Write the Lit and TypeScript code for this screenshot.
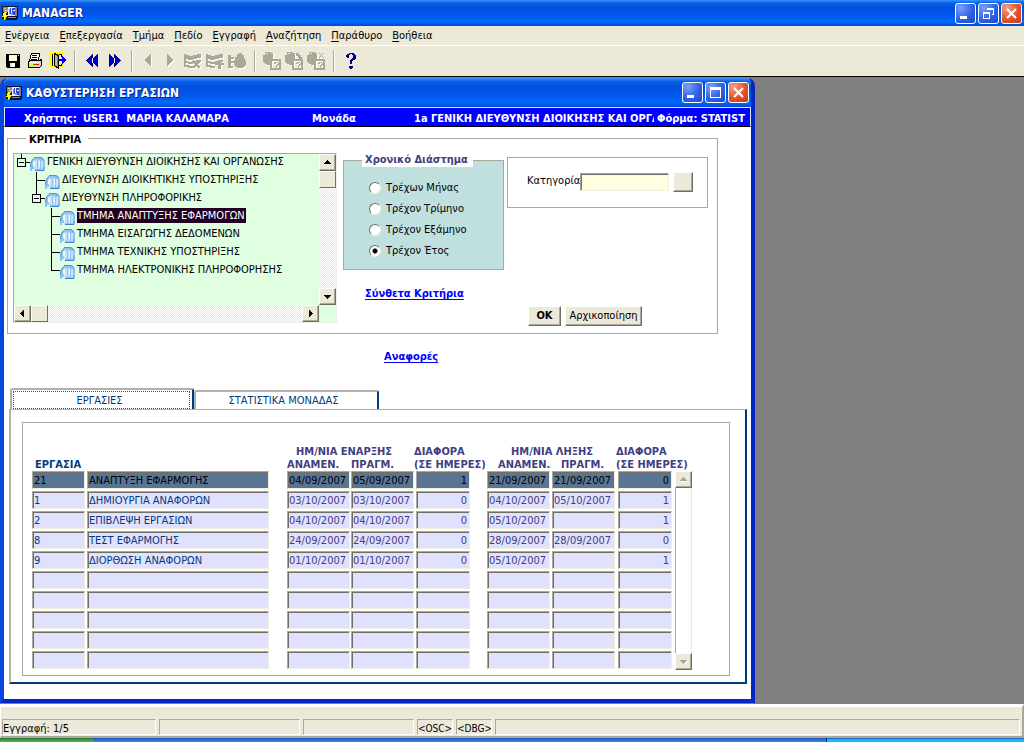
import { LitElement, html, svg, css, nothing } from "lit";
import { customElement, state } from "lit/decorators.js";
import { classMap } from "lit/directives/class-map.js";

interface TreeNode {
  text: string;
  level: number;
  open?: boolean;
  last?: boolean;
}

interface Task {
  code: string;
  name: string;
  startPlan: string;
  startReal: string;
  startDiff: string;
  endPlan: string;
  endReal: string;
  endDiff: string;
}

const MENU = ["Ενέργεια", "Επεξεργασία", "Τμήμα", "Πεδίο", "Εγγραφή", "Αναζήτηση", "Παράθυρο", "Βοήθεια"];

const TREE: TreeNode[] = [
  { text: "ΓΕΝΙΚΗ ΔΙΕΥΘΥΝΣΗ ΔΙΟΙΚΗΣΗΣ ΚΑΙ ΟΡΓΑΝΩΣΗΣ", level: 0, open: true },
  { text: "ΔΙΕΥΘΥΝΣΗ ΔΙΟΙΚΗΤΙΚΗΣ ΥΠΟΣΤΗΡΙΞΗΣ", level: 1 },
  { text: "ΔΙΕΥΘΥΝΣΗ ΠΛΗΡΟΦΟΡΙΚΗΣ", level: 1, open: true },
  { text: "ΤΜΗΜΑ ΑΝΑΠΤΥΞΗΣ ΕΦΑΡΜΟΓΩΝ", level: 2 },
  { text: "ΤΜΗΜΑ ΕΙΣΑΓΩΓΗΣ ΔΕΔΟΜΕΝΩΝ", level: 2 },
  { text: "ΤΜΗΜΑ ΤΕΧΝΙΚΗΣ ΥΠΟΣΤΗΡΙΞΗΣ", level: 2 },
  { text: "ΤΜΗΜΑ ΗΛΕΚΤΡΟΝΙΚΗΣ ΠΛΗΡΟΦΟΡΗΣΗΣ", level: 2, last: true },
];

const PERIODS = ["Τρέχων Μήνας", "Τρέχον Τρίμηνο", "Τρέχον Εξάμηνο", "Τρέχον Έτος"];

const task = (
  code = "", name = "", startPlan = "", startReal = "", startDiff = "", endPlan = "", endReal = "", endDiff = "",
): Task => ({ code, name, startPlan, startReal, startDiff, endPlan, endReal, endDiff });

const TASKS: Task[] = [
  task("21", "ΑΝΑΠΤΥΞΗ ΕΦΑΡΜΟΓΗΣ", "04/09/2007", "05/09/2007", "1", "21/09/2007", "21/09/2007", "0"),
  task("1", "ΔΗΜΙΟΥΡΓΙΑ ΑΝΑΦΟΡΩΝ", "03/10/2007", "03/10/2007", "0", "04/10/2007", "05/10/2007", "1"),
  task("2", "ΕΠΙΒΛΕΨΗ ΕΡΓΑΣΙΩΝ", "04/10/2007", "04/10/2007", "0", "05/10/2007", "", "1"),
  task("8", "ΤΕΣΤ ΕΦΑΡΜΟΓΗΣ", "24/09/2007", "24/09/2007", "0", "28/09/2007", "28/09/2007", "0"),
  task("9", "ΔΙΟΡΘΩΣΗ ΑΝΑΦΟΡΩΝ", "01/10/2007", "01/10/2007", "0", "05/10/2007", "", "1"),
  task(), task(), task(), task(), task(),
];

const FIELDS: { key: keyof Task; label: string; kind: string }[] = [
  { key: "code", label: "Κωδικός εργασίας", kind: "name" },
  { key: "name", label: "Εργασία", kind: "name wide" },
  { key: "startPlan", label: "Αναμενόμενη έναρξη", kind: "date" },
  { key: "startReal", label: "Πραγματική έναρξη", kind: "date" },
  { key: "startDiff", label: "Διαφορά έναρξης", kind: "diff" },
  { key: "endPlan", label: "Αναμενόμενη λήξη", kind: "date" },
  { key: "endReal", label: "Πραγματική λήξη", kind: "date" },
  { key: "endDiff", label: "Διαφορά λήξης", kind: "diff" },
];

/* Grey toolbar glyphs carry a white copy one pixel down and right. */
const etched = (shape: (c: string) => unknown) => svg`
  <g transform="translate(1 1)">${shape("#fff")}</g>${shape("#aca899")}`;

const grid = (c: string) => svg`
  <path fill=${c} d="M0 2h2v1h3v1h4v-1h4v-1h4v4h-4v1h-4v1h-5v-1h-2v2h2v1h5v-1h3v-1h5v2h-4v1h-4v1h-5v-1h-2v2h3v1h4v2h-5v-1h-4z"/>`;
const drum = (c: string) => svg`
  <path fill=${c} d="M2 0h6v1h2v6h-3v6h-3v-1h-2v-1h-1v-1h-1v-7h2z"/>
  <path fill="#ece9d8" d="M3 1h2v1h-2z"/>
  <path fill="none" stroke=${c} stroke-width="2" d="M8 8h9v9h-9z"/>
  <path fill=${c} d="M11 11h1v-1h3v1h1v2h-1v1h-1v1h-1v-2h1v-1h1v-1h-2v1h-2zM13 15h1v1h-1z"/>`;

const TOOLS: ({ label: string; off?: boolean; art: unknown } | null)[] = [
  {
    label: "Αποθήκευση",
    art: svg`<path fill="#000" d="M2 2h14v14h-13l-1-1z"/><path fill="#ffffd8" d="M5 3h8v6h-8z"/><path fill="#ece9d8" d="M14 3h1v1h-1zM6 11h5v4h-5z"/><path fill="#fff" d="M8 11h3v4h-3z"/>`,
  },
  {
    label: "Εκτύπωση",
    art: svg`<path fill="#fff" stroke="#000" d="M5.500 1.500h8l-1 7h-9z"/><path stroke="#000" d="M6 3.500h5M6 5.500h5M5 7.500h6"/><path fill="#d8d5c8" stroke="#000" d="M2.500 9.500l2-1h9l2-1v6l-2 2h-11z"/><path fill="#fff" d="M3 10h10v1h-10z"/><path fill="#ff0" d="M4 12h3v1h-3z"/><path fill="#f00" d="M10 12h3v1h-3z"/><path fill="#0a0" d="M7 12h3v1h-3z"/>`,
  },
  {
    label: "Έξοδος",
    art: svg`<path fill="#ff0" d="M1 0h15v3h-1v9h1v3h-14v-3h-1v-3h1v-3h-1z"/><path fill="#ece9d8" d="M11 4h2v10h-2z"/><path fill="#8a8a78" stroke="#000" d="M6.500 1.500l4 2v13l-4-3z"/><path fill="#b8b8a4" d="M7 3l2 1v10l-2-1z"/><path stroke="#000" d="M4.500 2v12M11 2.500h2v2M11 13.500h2v-2"/><path fill="#00f" d="M11 7h3v-3h1l3 4-3 4h-1v-3h-3z"/>`,
  },
  null,
  {
    label: "Προηγούμενο μπλοκ",
    art: svg`<path fill="#00c" stroke="#000080" d="M9.500 2.500v12l-6-6zM14.500 2.500v12l-6-6z"/><path stroke="#fff" d="M9.500 6v5"/>`,
  },
  {
    label: "Επόμενο μπλοκ",
    art: svg`<path fill="#00c" stroke="#000080" d="M4.500 2.500v12l6-6zM9.500 2.500v12l6-6z"/><path stroke="#fff" d="M9.500 6v5"/>`,
  },
  null,
  { label: "Προηγούμενη εγγραφή", off: true, art: etched((c) => svg`<path fill=${c} d="M11 2v12l-7-6z"/>`) },
  { label: "Επόμενη εγγραφή", off: true, art: etched((c) => svg`<path fill=${c} d="M5 2v12l7-6z"/>`) },
  {
    label: "Διαγραφή εγγραφής", off: true,
    art: etched((c) => svg`${grid(c)}<path stroke=${c} stroke-width="2" d="M9 9l7 7M16 9l-7 7"/>`),
  },
  {
    label: "Εισαγωγή εγγραφής", off: true,
    art: etched((c) => svg`${grid(c)}<path fill=${c} d="M12 8h3v3h3v2h-3v4h-3v-4h-3v-2h3z"/>`),
  },
  {
    label: "Κλείδωμα εγγραφής", off: true,
    art: etched((c) => svg`<path fill=${c} d="M0 3h3v2h3v2h-3v2h3v2h-3v3h2v2h-5zM9 2h2v-1h3v2h2v3h1v2h1v5h-1v2h-2v1h-6v-1h-2v-2h-1v-5h1v-3h2z"/>`),
  },
  null,
  { label: "Εισαγωγή κριτηρίων", off: true, art: etched(drum) },
  {
    label: "Εκτέλεση αναζήτησης", off: true,
    art: etched((c) => svg`${drum(c)}<path fill=${c} d="M11 1h3v2h2v2h2l-3 3-3-3h1v-1h-2z"/>`),
  },
  {
    label: "Ακύρωση αναζήτησης", off: true,
    art: etched((c) => svg`${drum(c)}<path stroke=${c} d="M12 1l5 5M17 1l-5 5"/>`),
  },
  null,
  {
    label: "Βοήθεια",
    art: svg`<path fill="#000080" d="M5 2h2v-1h5v1h1v1h1v4h-1v1h-2v1h-1v3h-2v-4h1v-1h1v-1h1v-3h-1v-1h-2v1h-1v3h-2v-1h-1v-2h1zM8 14h2v-0h1v2h-1v1h-2v-1h-1v-2h1z"/>`,
  },
];

const appIcon = html`<svg class="app-icon" viewBox="0 0 16 16" width="16" height="16" shape-rendering="crispEdges" aria-hidden="true">
  <path fill="#101020" d="M0 1h16v13h-1v1h-11v-1h-4z"/><path fill="#8088b0" d="M1 2h6v5h-6z"/><path fill="#c8cce0" d="M2 3h2v1h-2zM3 5h3v1h-3z"/>
  <path fill="#e8ecff" d="M6 2h7v9h-7z"/><path fill="#2848d8" d="M8 3h1v6h-1zM10 3h3v2h-2v1h2v4h-3z"/><path fill="#7898f0" d="M7 4h1v5h-1zM9 8h2v2h-2z"/>
  <path fill="#987888" d="M13 2h2v9h-2z"/><path fill="#90906c" d="M6 12h8v1h-8z"/>
  <path fill="#ff0" d="M2 7h3l-1 3h2l-4 6v-4h-2z"/>
</svg>`;

const arrow = (dir: "up" | "down" | "left" | "right", dim = false) => {
  const shapes = { up: "M4 9h7l-3.500-4z", down: "M4 6h7l-3.500 4z", left: "M9 4v7l-4-3.500z", right: "M6 4v7l4-3.500z" };
  return html`<svg viewBox="0 0 15 15" width="15" height="15" shape-rendering="crispEdges" aria-hidden="true">
    ${dim ? svg`<path fill="#fff" transform="translate(1 1)" d=${shapes[dir]} />` : nothing}
    <path fill=${dim ? "#aca899" : "#000"} d=${shapes[dir]} />
  </svg>`;
};

@customElement("window-buttons")
class WindowButtons extends LitElement {
  static properties = { restore: { type: Boolean } };
  declare restore: boolean;

  static styles = css`
    :host { display: flex; gap: 2px; }
    button {
      width: 21px; height: 21px; padding: 0; border: 1px solid #fff; border-radius: 3px;
      background: radial-gradient(circle at 25% 20%, #7ba0f8, #2f62e6 55%, #1c49c8); display: grid; place-items: center;
    }
    .close { background: radial-gradient(circle at 25% 20%, #f0a083, #e0542f 55%, #c33c13); }
    svg { display: block; }
  `;

  render() {
    const icon = (d: unknown) => html`<svg viewBox="0 0 19 19" width="19" height="19" aria-hidden="true" shape-rendering="crispEdges">${d}</svg>`;
    return html`
      <button aria-label="Ελαχιστοποίηση">${icon(svg`<path fill="#fff" d="M4 12h7v3h-7z"/>`)}</button>
      <button aria-label="Μέγεθος">${icon(this.restore
        ? svg`<path fill="none" stroke="#fff" d="M4.500 8.500h6v6h-6zM4 9.500h7M8.500 6v-1.500h6v6h-2M8 5.500h7"/>`
        : svg`<path fill="none" stroke="#fff" d="M4.500 4.500h10v10h-10z"/><path fill="#fff" d="M4 4h11v3h-11z"/>`)}</button>
      <button class="close" aria-label="Κλείσιμο"><svg viewBox="0 0 19 19" width="19" height="19" aria-hidden="true"><path stroke="#fff" stroke-width="2.200" d="M5 5l9 9M14 5l-9 9"/></svg></button>
    `;
  }
}

@customElement("org-tree")
class OrgTree extends LitElement {
  @state() private selected = 3;

  static styles = css`
    :host {
      display: grid; grid-template-columns: 1fr 17px; grid-template-rows: 1fr 17px; box-sizing: border-box;
      border: 1px solid; border-color: #aca899 #f1efe2 #f1efe2 #aca899; background: #e0ffe0;
      font: 11px/14px "DejaVu Sans Condensed", "DejaVu Sans", sans-serif; color: #000;
    }
    ul { margin: 0; padding: 0; list-style: none; overflow: hidden; }
    li { display: flex; align-items: flex-start; height: 18px; white-space: nowrap; }
    svg { display: block; flex: none; }
    .node { border: 0; padding: 0 1px 0 0; background: none; font: inherit; line-height: 15px; color: inherit; height: 15px; }
    .node.selected { background: #200020; color: #fff; }
    .bar { display: flex; background: repeating-conic-gradient(#fff 0 25%, #ece9d8 0 50%) 0 0 / 2px 2px; }
    .bar.v { flex-direction: column; }
    .bar button {
      width: 17px; height: 17px; padding: 0; background: #ece9d8; display: grid; place-items: center;
      border: 1px solid; border-color: #fff #716f64 #716f64 #fff; box-shadow: inset -1px -1px #aca899;
    }
    .track { flex: 1; }
    .thumb { width: 17px; height: 17px; box-sizing: border-box; background: #ece9d8; border: 1px solid; border-color: #fff #716f64 #716f64 #fff; }
  `;

  private branch(n: TreeNode) {
    const x = 7 + n.level * 15;
    const icon = x + 9;
    const stop = n.last ? 9 : n.open ? 4 : 18;
    return html`<svg width=${x + 26} height="18" shape-rendering="crispEdges" aria-hidden="true">
      <path fill="none" stroke="#000" d=${`M${x}.5 0V${stop}M${x}.5 8.5H${icon}`} />
      ${n.open ? svg`<path fill="#e0ffe0" stroke="#000" d=${`M${x - 4}.5 4.5h8v8h-8z`}/><path stroke="#000" d=${`M${x - 2} 8.500h5`}/>` : nothing}
      <g transform=${`translate(${icon} 2)`} shape-rendering="auto">
        <path fill="#8ec4f4" d="M0 15v-7q1-4 4-6l3-1h4q3 1 4 4v7l-2 2h-8v-1h-3v2z"/>
        <path fill="#c4e2fc" d="M4 13v-7l3-3v10zM8 13v-9h2v9zM11 13v-8h2v8z"/>
        <path fill="#f0f8ff" d="M3 10v-4l2-2v7zM9 5h1v6h-1z"/>
        <path fill="none" stroke="#5c94b4" d="M.5 11q0-6 3-8.500M4 1.500h6q3 0 4 3"/>
        <path fill="none" stroke="#3f88d0" d="M5 14.500h9v-3"/>
      </g>
    </svg>`;
  }

  render() {
    return html`
      <ul role="tree" aria-label="Μονάδες">
        ${TREE.map((n, i) => html`<li role="treeitem" aria-level=${n.level + 1}>${this.branch(n)}<button
          class=${classMap({ node: true, selected: i === this.selected })}
          @click=${() => (this.selected = i)}>${n.text}</button></li>`)}
      </ul>
      <div class="bar v">
        <button aria-label="Πάνω">${arrow("up")}</button><div class="thumb"></div><div class="track"></div>
        <button aria-label="Κάτω">${arrow("down")}</button>
      </div>
      <div class="bar">
        <button aria-label="Αριστερά">${arrow("left")}</button><div class="thumb"></div><div class="track"></div>
        <button aria-label="Δεξιά">${arrow("right")}</button>
      </div>
    `;
  }
}

@customElement("task-table")
class TaskTable extends LitElement {
  @state() private current = 0;

  static styles = css`
    :host { display: flex; gap: 0; font: 11px/14px "DejaVu Sans Condensed", "DejaVu Sans", sans-serif; }
    table { width: 643px; table-layout: fixed; border-collapse: collapse; }
    th, td { padding: 0; }
    th { font-weight: bold; color: #404080; text-align: left; white-space: nowrap; height: 14px; }
    .units th { height: 12px; line-height: 12px; }
    th.task { color: #003c7c; padding-left: 3px; }
    .group { text-align: left; padding-left: 9px; }
    .group.end { padding-left: 24px; }
    .plan { padding-left: 11px; }
    .real { padding-left: 9px; }
    .gap { text-indent: -2px; }
    td { height: 20px; vertical-align: top; }
    input {
      display: block; box-sizing: border-box; width: 63px; height: 18px; padding: 0 0 0 1px; margin: 0; outline: 0;
      border: 1px solid; border-color: #aca899 #f1efe2 #f1efe2 #aca899; box-shadow: inset 1px 1px #716f64;
      background: #e0e0ff; font: inherit; color: #404080; border-radius: 0;
    }
    .name { width: 53px; color: #003c7c; }
    .wide { width: 182px; }
    .diff { width: 54px; text-align: right; padding-right: 2px; }
    .current input { background: #5a7593; color: #000; }
    .bar {
      width: 17px; margin-top: 26px; height: 199px; display: flex; flex-direction: column; justify-content: space-between;
      box-sizing: border-box; border-left: 1px solid #aca899; border-right: 1px solid #ece9d8;
    }
    .bar button {
      width: 17px; height: 17px; margin-left: -1px; padding: 0; background: #ece9d8; display: grid; place-items: center;
      border: 1px solid; border-color: #fff #716f64 #716f64 #fff; box-shadow: inset -1px -1px #aca899;
    }
  `;

  render() {
    return html`
      <table>
        <colgroup>
          <col width="55" /><col width="200" /><col width="64" /><col width="65" /><col width="71" /><col width="65" /><col width="66" /><col width="57" />
        </colgroup>
        <thead>
          <tr>
            <th colspan="2"></th><th class="group" colspan="2">ΗΜ/ΝΙΑ ΕΝΑΡΞΗΣ</th><th class="gap">ΔΙΑΦΟΡΑ</th>
            <th class="group end" colspan="2">ΗΜ/ΝΙΑ ΛΗΞΗΣ</th><th class="gap">ΔΙΑΦΟΡΑ</th>
          </tr>
          <tr class="units">
            <th class="task" colspan="2">ΕΡΓΑΣΙΑ</th><th>ΑΝΑΜΕΝ.</th><th>ΠΡΑΓΜ.</th><th class="gap">(ΣΕ ΗΜΕΡΕΣ)</th>
            <th class="plan">ΑΝΑΜΕΝ.</th><th class="real">ΠΡΑΓΜ.</th><th class="gap">(ΣΕ ΗΜΕΡΕΣ)</th>
          </tr>
        </thead>
        <tbody>
          ${TASKS.map((t, i) => html`<tr class=${classMap({ current: i === this.current })}>
            ${FIELDS.map((f) => html`<td><input class=${f.kind} aria-label=${`${f.label} ${i + 1}`} .value=${t[f.key]}
              @focus=${() => (this.current = i)} /></td>`)}
          </tr>`)}
        </tbody>
      </table>
      <div class="bar">
        <button aria-label="Πάνω">${arrow("up", true)}</button>
        <button aria-label="Κάτω">${arrow("down", true)}</button>
      </div>
    `;
  }
}

@customElement("app-root")
class AppRoot extends LitElement {
  @state() private tab = 0;

  static styles = css`
    :host {
      display: flex; flex-direction: column; height: 100vh; overflow: hidden; background: #808080; color: #000;
      font: 11px/14px "DejaVu Sans Condensed", "DejaVu Sans", sans-serif;
    }
    .title {
      display: flex; align-items: center; gap: 4px; flex: none; height: 26px; padding: 0 2px; color: #fff;
      background: linear-gradient(#3a95ff, #0a5fe8 12%, #0050dc 30%, #0058ee 60%, #0068ff 85%, #0048c8);
    }
    .title h1, .title h2 { flex: 1; margin: 0; font: bold 12px/16px "DejaVu Sans Condensed", "DejaVu Sans", sans-serif; text-shadow: 1px 1px #0a1883; }
    .app-icon { display: block; }
    nav { display: flex; flex: none; gap: 10px; height: 19px; padding: 0 5px; align-items: center; background: #ece9d8; border-bottom: 1px solid #fff; }
    nav a { color: inherit; text-decoration: none; }
    nav u { text-decoration: underline; text-underline-offset: 2px; }
    .tools { display: flex; flex: none; align-items: center; height: 30px; padding: 0 2px; background: #ece9d8; border-bottom: 1px solid #000; }
    .tools button { width: 22px; height: 22px; padding: 0; border: 0; background: none; display: grid; place-items: center; }
    .tools svg { display: block; }
    .sep { width: 1px; height: 22px; margin: 0 5px 0 6px; border-right: 1px solid #fff; background: #aca899; box-sizing: content-box; }
    .desk { flex: 1; min-height: 0; display: flex; align-items: flex-start; padding: 1px 0 0; background: #808080; }

    .window {
      width: 755px; height: 100%; box-sizing: border-box; display: flex; flex-direction: column; overflow: hidden;
      background: #fff; border-radius: 8px 8px 0 0; border: solid #0845e0; border-width: 0 4px 4px;
      border-right-color: #0428c0; border-bottom-color: #0428c0;
    }
    .window .title { height: 29px; margin: 0 -4px; padding: 0 6px; gap: 4px; }
    .info {
      flex: none; display: grid; grid-template-columns: 59px 229px 102px 240px 1fr; height: 18px; padding-left: 19px;
      border: 1px solid; border-color: #dfe4ff #dfe4ff #000 #dfe4ff; background: #00f; color: #fff; font-weight: bold; line-height: 22px; white-space: nowrap;
    }
    .info span { overflow: hidden; white-space: pre; }
    .info .form { margin-left: 3px; }
    fieldset { margin: 0; padding: 0; min-width: 0; border: 1px solid #aca899; }
    legend { font-weight: bold; }
    .criteria { margin: 2px 33px 0 3px; padding: 0 0 7px 5px; display: block; }
    .criteria > legend { margin-left: 13px; padding: 4px 7px 0 3px; }
    .criteria-row { display: grid; grid-template-columns: 324px 161px 1fr; grid-template-rows: 173px; column-gap: 6px; padding-top: 6px; }
    org-tree { height: 170px; }
    .middle { display: flex; flex-direction: column; align-items: flex-start; }
    .period { width: 161px; box-sizing: border-box; height: 117px; padding: 10px 0 0 25px; }
    .period { background: #c0dfdf; }
    .period legend { margin-left: -7px; padding: 0 5px 0 3px; background: #fff; color: #404080; line-height: 14px; }
    .period label { display: flex; align-items: center; gap: 5px; height: 21px; }
    .period input {
      appearance: none; width: 12px; height: 12px; margin: 0; border-radius: 50%; background: #fff;
      border: 1px solid; border-color: #716f64 #f1efe2 #f1efe2 #716f64;
    }
    .period input:checked { background: radial-gradient(circle, #000 0 2px, #fff 3px); }
    a.link { color: #00f; font-weight: bold; text-decoration: underline; text-underline-offset: 2px; }
    .middle .link { margin: 17px 0 0 22px; }
    .right { display: flex; flex-direction: column; padding-right: 9px; margin-left: -3px; }
    .category { height: 47px; padding-bottom: 2px; margin-top: 4px; border: 1px solid #aca899; display: flex; align-items: center; padding-left: 19px; }
    .category label { width: 53px; white-space: nowrap; padding-bottom: 2px; }
    .category input {
      width: 89px; height: 18px; box-sizing: border-box; margin: 0; padding: 0 2px; background: #ffffe0; border: 1px solid;
      border-color: #aca899 #f1efe2 #f1efe2 #aca899; box-shadow: inset 1px 1px #716f64; font: inherit; outline: 0;
    }
    .push {
      padding: 0; height: 20px; background: #ece9d8; border: 1px solid; border-color: #fff #716f64 #716f64 #fff;
      box-shadow: inset -1px -1px #aca899; font: inherit; color: #000;
    }
    .pick { width: 20px; margin-left: 4px; }
    .actions { display: flex; gap: 4px; margin: auto 0 0 21px; }
    .push.ok { width: 33px; font-weight: bold; }
    .reset { width: 77px; }
    .reports { margin: 16px 0 0 380px; }

    .tabs { display: flex; align-items: flex-end; margin: 24px 0 0 6px; height: 21px; }
    .tabs button {
      width: 185px; height: 19px; padding: 0 6px 0 0; background: #fff; font: inherit; color: #003c7c;
      border: solid #b0b0b0; border-width: 2px 0 0 2px; border-right: 2px solid #003c7c; border-radius: 3px 2px 0 0;
    }
    .tabs .on { width: 184px; height: 21px; padding: 1px 2px 1px 1px; }
    .tabs .on span { display: block; height: 16px; line-height: 18px; padding-right: 4px; border: 1px dotted #804000; }
    .panel {
      margin: 0 4px 0 5px; padding: 12px 15px 6px 11px; border: solid; border-width: 1px 2px 2px;
      border-color: #b0b0b0 #003c7c #003c7c #b0b0b0;
    }
    .well { border: 1px solid #aca899; padding: 22px 9px 4px 9px; }

    footer {
      flex: none; display: flex; align-items: flex-end; gap: 3px; height: 34px; box-sizing: border-box; padding: 0 2px 1px 1px;
      background: #ece9d8; border: solid; border-width: 3px 2px 2px 1px; border-color: #fff #aca899 #aca899 #fff; margin-top: 1px;
    }
    .cell { height: 14px; border: 1px solid; border-color: #aca899 #fff #fff #aca899; white-space: nowrap; overflow: hidden; box-sizing: content-box; line-height: 17px; font-size: 11px; }
    .record { width: 152px; }
    .blank1 { width: 139px; }
    .blank2 { width: 109px; }
    .flag { width: 34px; text-align: center; font-size: 10px; }
    .rest { flex: 1; }
    .taskbar { flex: none; display: flex; height: 4px; background: linear-gradient(#1c54c4, #3f86ee); }
    .start { width: 94px; background: linear-gradient(#2c7a2c, #58b858); border-radius: 0 4px 0 0; }
    .tray { margin-left: auto; width: 197px; border-left: 1px solid #103070; background: linear-gradient(#1470c8 25%, #18b8f4 25%); }
  `;

  render() {
    return html`
      <header class="title">${appIcon}<h1>MANAGER</h1><window-buttons restore></window-buttons></header>
      <nav>${MENU.map((m) => html`<a href="#"><u>${m[0]}</u>${m.slice(1)}</a>`)}</nav>
      <div class="tools">
        ${TOOLS.map((t) => t === null
          ? html`<div class="sep"></div>`
          : html`<button aria-label=${t.label} ?disabled=${t.off}><svg viewBox="0 0 18 18" width="18" height="18" fill="none" shape-rendering="crispEdges" aria-hidden="true">${t.art}</svg></button>`)}
      </div>

      <main class="desk">
        <section class="window">
          <div class="title">${appIcon}<h2>ΚΑΘΥΣΤΕΡΗΣΗ ΕΡΓΑΣΙΩΝ</h2><window-buttons></window-buttons></div>
          <div class="info">
            <span>Χρήστης:</span><span>USER1  ΜΑΡΙΑ ΚΑΛΑΜΑΡΑ</span><span>Μονάδα</span>
            <span>1a ΓΕΝΙΚΗ ΔΙΕΥΘΥΝΣΗ ΔΙΟΙΚΗΣΗΣ ΚΑΙ ΟΡΓΑ</span><span class="form">Φόρμα: STATIST</span>
          </div>

          <fieldset class="criteria">
            <legend>ΚΡΙΤΗΡΙΑ</legend>
            <div class="criteria-row">
              <org-tree></org-tree>
              <div class="middle">
                <fieldset class="period">
                  <legend>Χρονικό Διάστημα</legend>
                  ${PERIODS.map((p, i) => html`<label><input type="radio" name="period" ?checked=${i === 3} />${p}</label>`)}
                </fieldset>
                <a class="link" href="#">Σύνθετα Κριτήρια</a>
              </div>
              <div class="right">
                <div class="category">
                  <label for="category">Κατηγορία</label><input id="category" />
                  <button class="push pick" aria-label="Επιλογή κατηγορίας"></button>
                </div>
                <div class="actions">
                  <button class="push ok">OK</button><button class="push reset">Αρχικοποίηση</button>
                </div>
              </div>
            </div>
          </fieldset>

          <div class="reports"><a class="link" href="#">Αναφορές</a></div>

          <div class="tabs" role="tablist">
            ${["ΕΡΓΑΣΙΕΣ", "ΣΤΑΤΙΣΤΙΚΑ ΜΟΝΑΔΑΣ"].map((t, i) => html`<button role="tab" aria-selected=${i === this.tab}
              class=${classMap({ on: i === this.tab })} @click=${() => (this.tab = i)}><span>${t}</span></button>`)}
          </div>
          <div class="panel"><div class="well"><task-table></task-table></div></div>
        </section>
      </main>

      <footer>
        <div class="cell record">Εγγραφή: 1/5</div><div class="cell blank1"></div><div class="cell blank2"></div>
        <div class="cell flag">&lt;OSC&gt;</div><div class="cell flag">&lt;DBG&gt;</div><div class="cell rest"></div>
      </footer>
      <div class="taskbar"><div class="start"></div><div class="tray"></div></div>
    `;
  }
}
